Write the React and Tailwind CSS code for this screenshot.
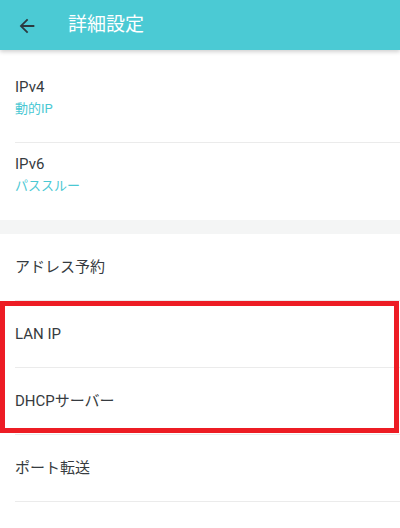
import React from 'react';

const font = { fontFamily: 'Roboto, "Noto Sans CJK JP", sans-serif' };

function BackArrow() {
  return (
    <svg width="22" height="22" viewBox="0 0 24 24" fill="#2b3a40">
      <path d="M20 11H7.83l5.59-5.59L12 4l-8 8 8 8 1.41-1.41L7.83 13H20v-2z" />
    </svg>
  );
}

function TwoLineRow({ title, value, divider }) {
  return (
    <div className={`ml-[15px] h-[76px] pt-[11px] ${divider ? 'border-b border-[#ebebeb] h-[77px]' : ''}`}>
      <div className="text-[15px] leading-[20px] text-[#363b40]">{title}</div>
      <div className="mt-[3px] text-[13px] leading-[18px] text-[#4ac8d3]">{value}</div>
    </div>
  );
}

function Row({ title }) {
  return (
    <div className="ml-[15px] h-[67px] border-b border-[#ebebeb] flex items-center">
      <span className="text-[15px] text-[#363b40]">{title}</span>
    </div>
  );
}

export default function App() {
  const items = ['アドレス予約', 'LAN IP', 'DHCPサーバー', 'ポート転送', 'TP-Link DDNS'];

  return (
    <div className="w-[400px] h-[528px] overflow-hidden bg-white" style={font}>
      {/* header */}
      <div className="relative z-10 h-[50px] bg-[#4bcad4] flex items-center shadow-[0_2px_4px_rgba(0,0,0,0.18)]">
        <div className="ml-[16px] mt-px flex">
          <BackArrow />
        </div>
        <h1 className="ml-[30px] text-[19px] text-white">詳細設定</h1>
      </div>

      {/* WAN */}
      <div className="pt-[16px] pb-px">
        <TwoLineRow title="IPv4" value="動的IP" divider />
        <TwoLineRow title="IPv6" value="パススルー" />
      </div>

      <div className="h-[14px] bg-[#f4f5f5]" />

      {/* other settings */}
      <div className="relative">
        {items.map((t) => (
          <Row key={t} title={t} />
        ))}
        {/* highlight box */}
        <div className="absolute left-0 right-[1px] top-[67px] h-[132px] border-[5px] border-[#ed1c24]" />
      </div>
    </div>
  );
}
